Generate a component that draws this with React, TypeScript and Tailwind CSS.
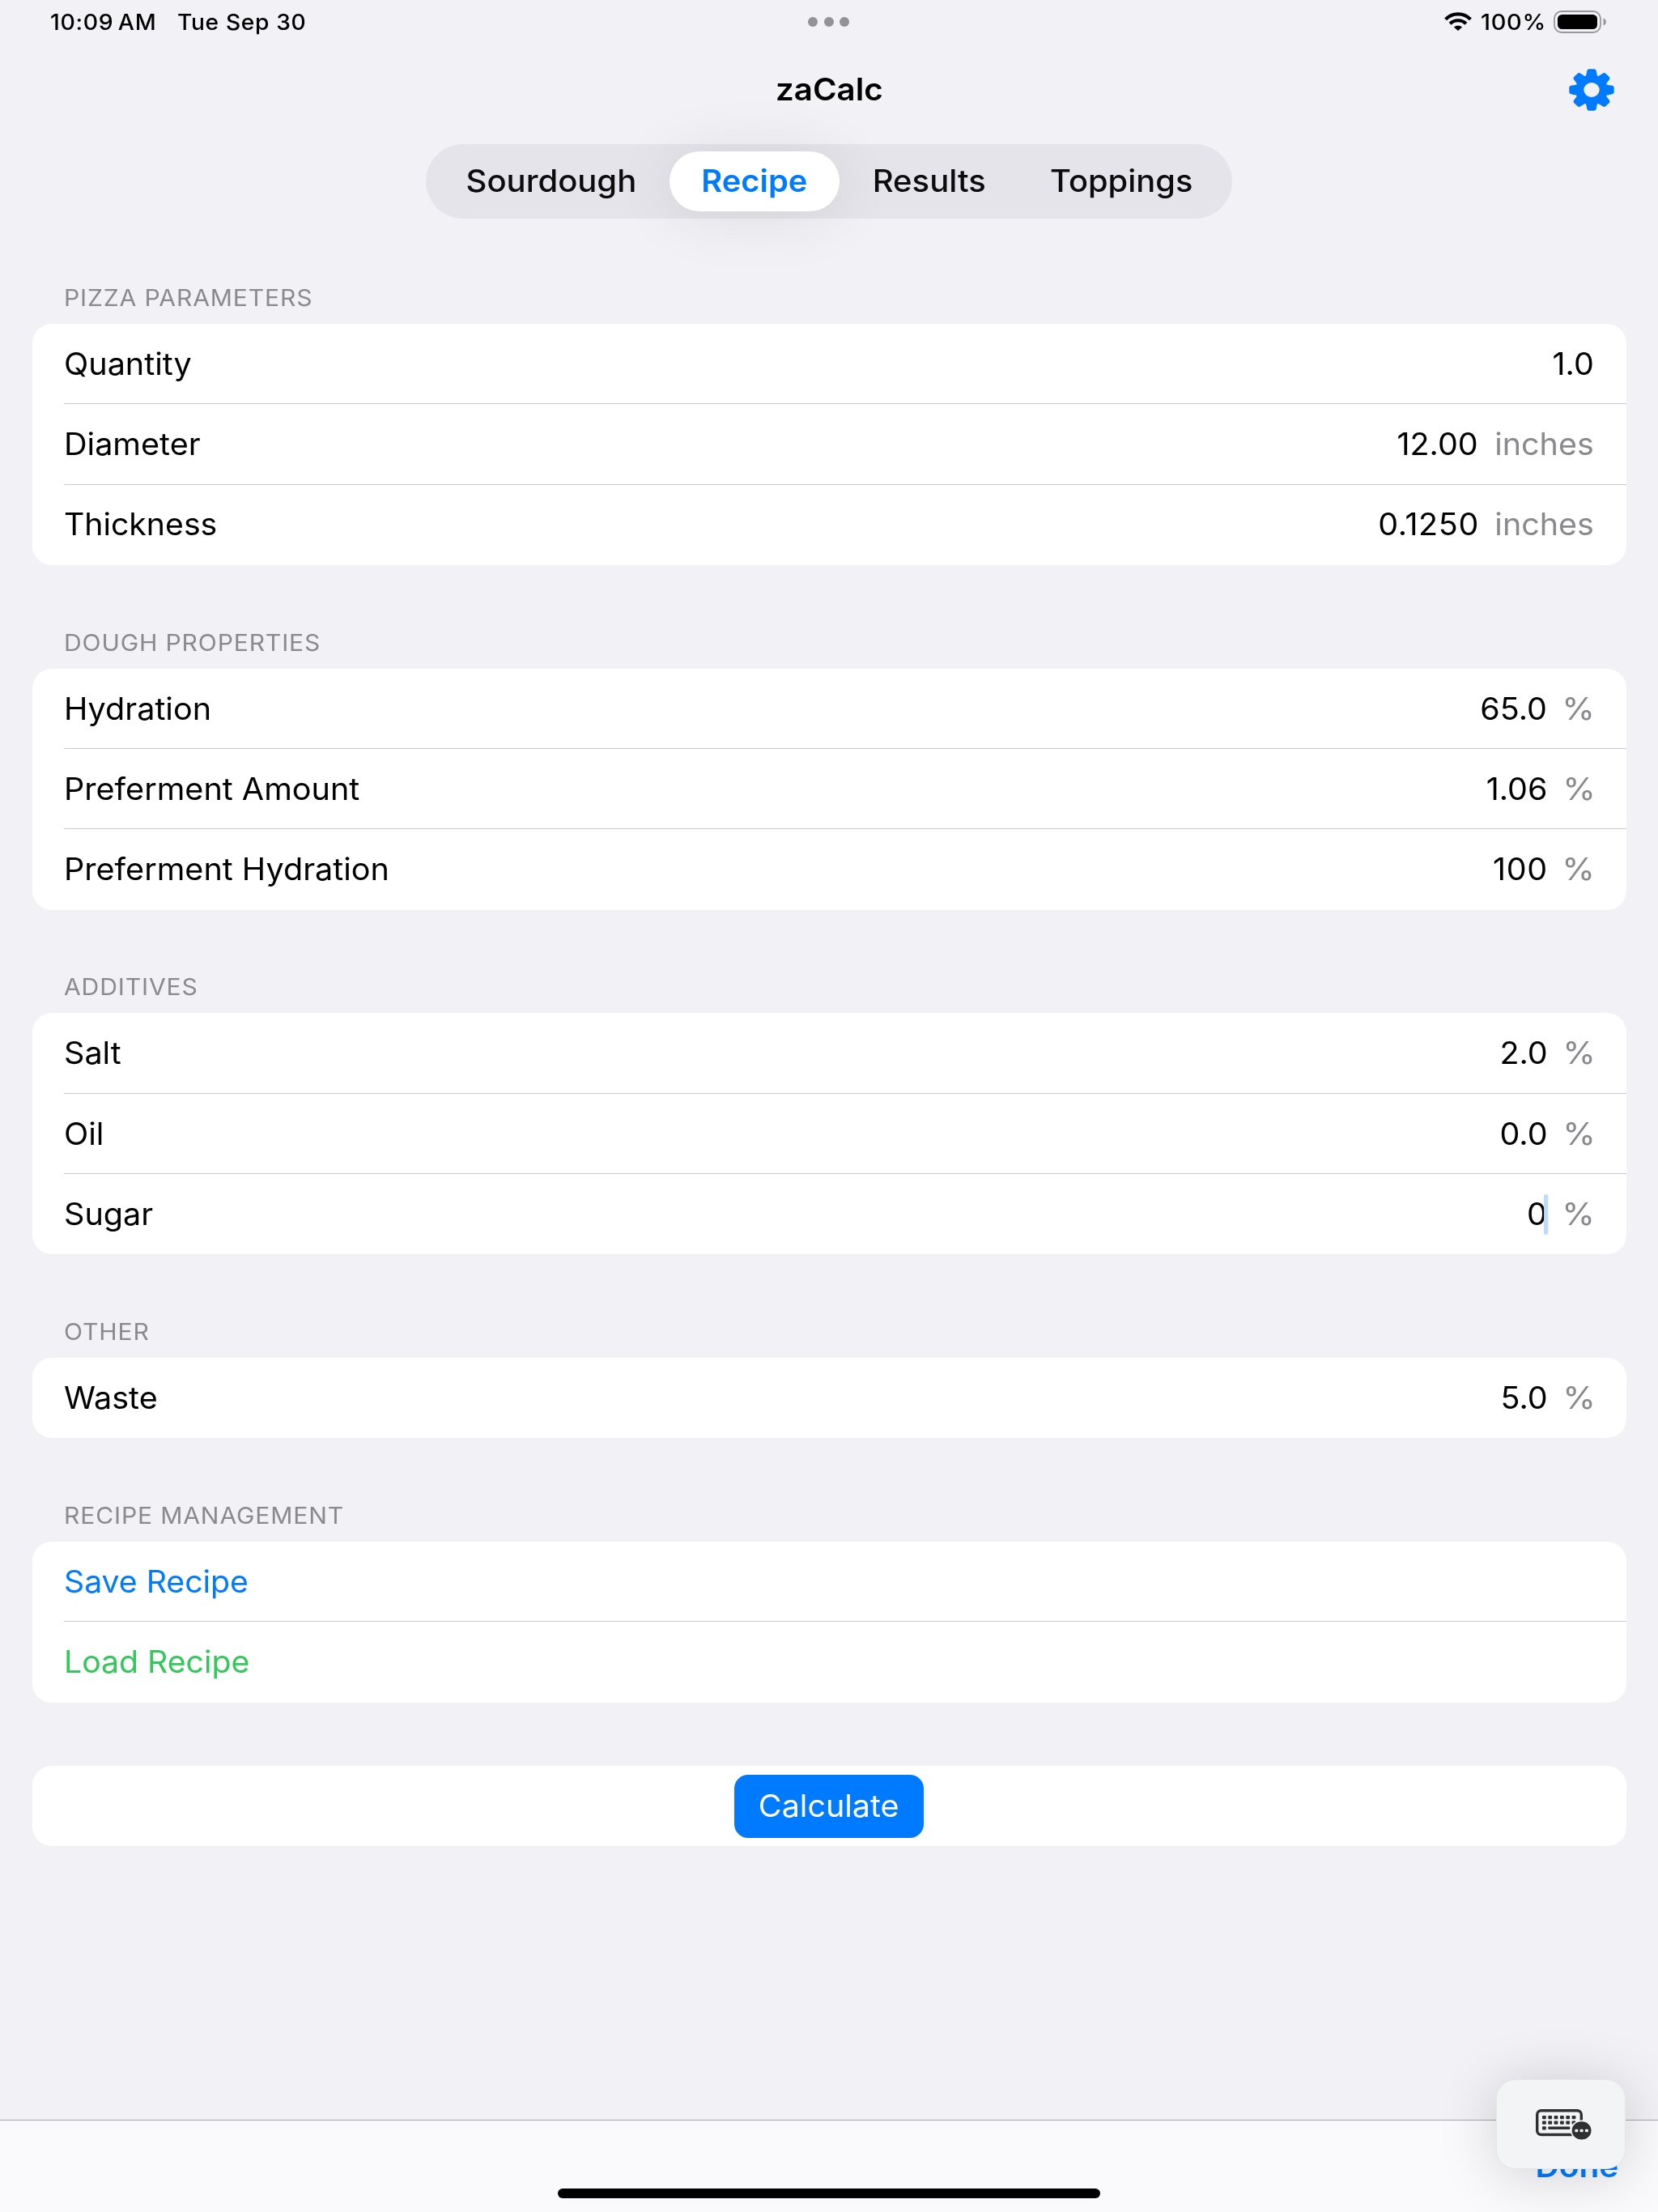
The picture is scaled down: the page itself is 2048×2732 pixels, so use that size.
import type { ReactNode } from "react";

type RowData = { label: string; value?: string; unit?: string; caret?: boolean; labelClass?: string; valueClass?: string };

function Row({ row, last }: { row: RowData; last: boolean }) {
  return (
    <div className="h-[99.3px] pl-[39.5px]">
      <div
        className={`flex h-full items-center justify-between pr-[39.5px] ${last ? "" : "border-b border-[#c9c9cb] pt-[1.4px]"}`}
      >
        <span className={`origin-left ${row.labelClass ?? "scale-x-[1.053]"}`}>{row.label}</span>
        <span className="flex origin-right scale-x-[1.05] items-center gap-[19.5px]">
          {row.value && (
            <span className={`relative ${row.valueClass ?? ""}`}>
              {row.value}
              {row.caret && (
                <span className="absolute -right-[1.5px] top-1/2 h-[50px] w-[5px] -translate-y-1/2 rounded-full bg-[#bbdcff]" />
              )}
            </span>
          )}
          {row.unit && (
            <span className={`text-[#8a8a8e] ${row.unit === "%" ? "-mr-[1.5px] origin-right scale-x-105" : ""}`}>
              {row.unit}
            </span>
          )}
        </span>
      </div>
    </div>
  );
}

function Card({ children }: { children: ReactNode }) {
  return <div className="overflow-hidden rounded-[24px] bg-white">{children}</div>;
}

function Section({ title, rows }: { title: string; rows: RowData[] }) {
  return (
    <section>
      <h2 className="flex h-[127.8px] items-end pb-[15px] pl-[39.5px] text-[28.4px] leading-[34px] tracking-[0.8px] text-[#8a8a8e]">
        <span className="origin-left scale-x-[1.06]">{title}</span>
      </h2>
      <Card>
        {rows.map((r, i) => (
          <Row key={r.label} row={r} last={i === rows.length - 1} />
        ))}
      </Card>
    </section>
  );
}

const sections: { title: string; rows: RowData[] }[] = [
  {
    title: "PIZZA PARAMETERS",
    rows: [
      { label: "Quantity", value: "1.0" },
      { label: "Diameter", value: "12.00", unit: "inches" },
      {
        label: "Thickness",
        value: "0.1250",
        unit: "inches",
        labelClass: "scale-x-[1.043]",
        valueClass: "tracking-[0.6px] -mr-[1px]",
      },
    ],
  },
  {
    title: "DOUGH PROPERTIES",
    rows: [
      { label: "Hydration", value: "65.0", unit: "%" },
      { label: "Preferment Amount", value: "1.06", unit: "%" },
      { label: "Preferment Hydration", value: "100", unit: "%", valueClass: "tracking-[0.6px] -mr-[0.6px]" },
    ],
  },
  {
    title: "ADDITIVES",
    rows: [
      { label: "Salt", value: "2.0", unit: "%" },
      { label: "Oil", value: "0.0", unit: "%" },
      { label: "Sugar", value: "0", unit: "%", caret: true },
    ],
  },
  { title: "OTHER", rows: [{ label: "Waste", value: "5.0", unit: "%" }] },
  {
    title: "RECIPE MANAGEMENT",
    rows: [
      { label: "Save Recipe", labelClass: "scale-x-[1.043] text-[#007aff]" },
      { label: "Load Recipe", labelClass: "scale-x-[1.043] text-[#34c759]" },
    ],
  },
];

function WifiIcon() {
  return (
    <svg width="34" height="24" viewBox="0 0 34 24" className="block">
      <g fill="none" stroke="#000" strokeWidth="4.2">
        <path d="M1.6 8.9 C10 0.1 24 0.1 32.4 8.9" />
        <path d="M7.1 14.3 C12.5 8.9 21.5 8.9 26.9 14.3" />
      </g>
      <path d="M17 23 L11.9 18.6 C14.6 16 19.4 16 22.1 18.6 Z" fill="#000" />
    </svg>
  );
}

function BatteryIcon() {
  return (
    <svg width="66" height="28" viewBox="0 0 66 28" className="block">
      <rect x="1" y="1" width="57" height="26" rx="9" fill="none" stroke="#98989c" strokeWidth="1.8" />
      <rect x="5" y="5" width="49" height="18" rx="5.5" fill="#000" />
      <path d="M61.5 9.5 C66 11 66 17 61.5 18.5 Z" fill="#98989c" />
    </svg>
  );
}

function GearIcon() {
  const teeth = [0, 45, 90, 135, 180, 225, 270, 315];
  return (
    <svg width="56" height="52" viewBox="-28 -28 56 56" preserveAspectRatio="none" className="block">
      <defs>
        <mask id="hub">
          <rect x="-28" y="-28" width="56" height="56" fill="#fff" />
          <circle r="9.7" fill="#000" />
        </mask>
      </defs>
      <g mask="url(#hub)" fill="#007aff">
        <circle r="19.4" />
        {teeth.map((a) => (
          <path
            key={a}
            transform={`rotate(${a})`}
            d="M-9 -16.5 C-6.8 -18 -6.5 -20.5 -5.9 -24.6 Q-5.4 -27.7 -2.8 -27.7 H2.8 Q5.4 -27.7 5.9 -24.6 C6.5 -20.5 6.8 -18 9 -16.5 Z"
          />
        ))}
      </g>
    </svg>
  );
}

function KeyboardIcon() {
  const cols = [8, 15.3, 22.6, 30, 37.3, 44.6];
  return (
    <svg width="70" height="38" viewBox="0 0 70 38" className="block">
      <rect x="1.7" y="1.7" width="54.6" height="29.8" rx="5" fill="none" stroke="#2f3031" strokeWidth="3.4" />
      <g fill="#2f3031">
        {cols.map((x) => (
          <g key={x}>
            <rect x={x} y="8" width="4.8" height="4.2" rx="1" />
            <rect x={x} y="14.5" width="4.8" height="4.2" rx="1" />
          </g>
        ))}
        <rect x="8" y="21.2" width="4.8" height="4.2" rx="1" />
        <rect x="15.3" y="21.5" width="27" height="3.4" rx="1" />
      </g>
      <ellipse cx="56.6" cy="26.4" rx="13.6" ry="13" fill="#f3f4f6" />
      <ellipse cx="56.6" cy="26.4" rx="11.9" ry="11.2" fill="#2f3031" />
      <g fill="#f3f4f6">
        <rect x="48.3" y="24.7" width="4" height="3.6" rx="1.2" />
        <rect x="54.6" y="24.7" width="4" height="3.6" rx="1.2" />
        <rect x="60.9" y="24.7" width="4" height="3.6" rx="1.2" />
      </g>
    </svg>
  );
}

export default function App() {
  return (
    <div className="relative flex h-[2732px] w-[2048px] flex-col overflow-hidden bg-[#f2f1f6] font-['Inter',sans-serif] text-[37.6px] leading-[46px] text-black">
      <header className="grid h-[54px] grid-cols-3 items-center text-[26.6px] font-medium leading-[32px] tracking-[0.6px]">
        <div className="flex pl-[62px]">
          <span className="w-[157px] origin-left">
            <span className="inline-block origin-left scale-x-[1.07] [word-spacing:-2.5px]">10:09 AM</span>
          </span>
          <span className="origin-left scale-x-[1.06]">Tue Sep 30</span>
        </div>
        <div className="flex justify-center gap-[7.5px]">
          <i className="size-[12px] rounded-full bg-[#939297]" />
          <i className="size-[12px] rounded-full bg-[#939297]" />
          <i className="size-[12px] rounded-full bg-[#939297]" />
        </div>
        <div className="flex items-center justify-end pr-[63px]">
          <WifiIcon />
          <span className="ml-[11px] flex w-[90px] justify-start">
            <span className="origin-left scale-x-[1.09]">100%</span>
          </span>
          <BatteryIcon />
        </div>
      </header>

      <div className="grid h-[124px] grid-cols-3 items-start">
        <span />
        <h1 className="scale-x-[1.07] pt-[34px] text-center font-semibold">zaCalc</h1>
        <div className="flex justify-end pr-[54px] pt-[31px]">
          <GearIcon />
        </div>
      </div>

      <nav className="mx-auto flex h-[92px] w-[996px] items-center rounded-full bg-[#e5e4ea] px-[9px] font-medium text-[#0c0c0d]">
        <span className="flex w-[292px] justify-center">
          <span className="scale-x-[1.065]">Sourdough</span>
        </span>
        <span className="flex h-[74px] w-[210px] items-center justify-center rounded-full bg-white font-semibold text-[#007aff] shadow-[0_4px_80px_rgba(0,0,0,0.09)]">
          <span className="scale-x-[1.06]">Recipe</span>
        </span>
        <span className="flex w-[221px] justify-center">
          <span className="scale-x-[1.065]">Results</span>
        </span>
        <span className="flex flex-1 justify-center">
          <span className="scale-x-[1.06]">Toppings</span>
        </span>
      </nav>

      <main className="flex flex-col px-[39.5px] pt-[2.2px]">
        {sections.map((s) => (
          <Section key={s.title} title={s.title} rows={s.rows} />
        ))}
        <div className="mt-[78px]">
          <Card>
            <div className="flex h-[99px] items-center justify-center pt-[1px]">
              <button className="h-[78px] w-[234px] rounded-[17px] bg-[#007aff] text-white">
                <span className="inline-block scale-x-105">Calculate</span>
              </button>
            </div>
          </Card>
        </div>
      </main>

      <footer className="mt-auto flex h-[114px] justify-end border-t border-[#a5a5aa] bg-[#fafafc] pr-[49px] pt-[34px] font-semibold text-[#007aff]">
        <span className="origin-right scale-x-[1.08]">Done</span>
      </footer>

      <div className="absolute left-[1848px] top-[2568px] flex h-[111px] w-[160px] items-center rounded-[24px] border border-[#e6e7e9] bg-[#f3f4f6] pl-[48px] shadow-[0_6px_70px_rgba(0,0,0,0.17)]">
        <KeyboardIcon />
      </div>
      <div className="absolute bottom-[17.5px] left-[689px] h-[12px] w-[670px] rounded-full bg-black" />
    </div>
  );
}
